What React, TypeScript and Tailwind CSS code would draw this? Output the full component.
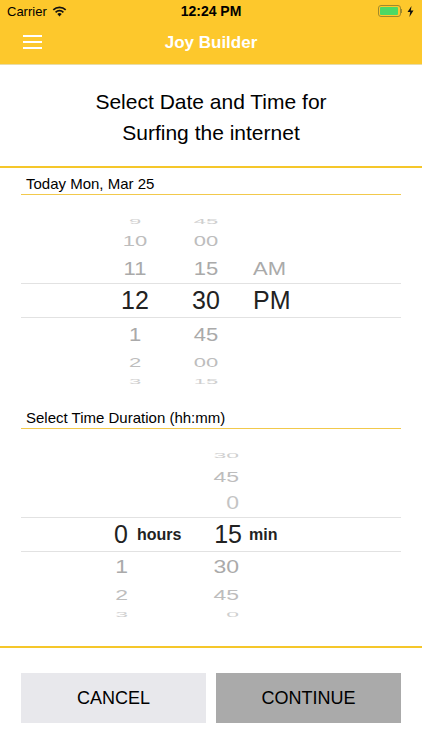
import React from "react";

const font = { fontFamily: '"Liberation Sans", Arial, sans-serif' };

type Cell = { h?: string; m?: string; ap?: string };

const StatusBar = () => (
  <div className="h-[22px] bg-[#fdc82c] flex items-center justify-between px-[7px] text-black">
    <div className="flex items-center gap-[5px] w-[110px]">
      <span className="text-[13px] leading-none">Carrier</span>
      <svg width="15" height="11" viewBox="0 0 15 11">
        <path d="M7.5 10.5 L5.3 8.1 A3.2 3.2 0 0 1 9.7 8.1 Z" fill="#111" />
        <path d="M3.6 6.3 A5.6 5.6 0 0 1 11.4 6.3" stroke="#111" strokeWidth="1.7" fill="none" />
        <path d="M1.3 3.9 A9 9 0 0 1 13.7 3.9" stroke="#111" strokeWidth="1.7" fill="none" />
      </svg>
    </div>
    <span className="text-[14px] font-bold leading-none">12:24 PM</span>
    <div className="flex items-center justify-end gap-[3px] w-[110px] pr-[1px]">
      <div className="w-[23px] h-[12px] rounded-[3px] border border-[#a08a2c] p-[1px] flex">
        <div className="w-[18px] h-full rounded-[1px] bg-[#4cd964]" />
      </div>
      <div className="w-[1px] h-[4px] bg-[#a08a2c] -ml-[3px]" />
      <svg width="7" height="11" viewBox="0 0 7 11" className="ml-[2px]">
        <path d="M4.5 0 L0.5 6 L3.2 6 L2.4 11 L6.5 4.6 L3.8 4.6 Z" fill="#111" />
      </svg>
    </div>
  </div>
);

const NavBar = () => (
  <div className="h-[43px] bg-[#fdc82c] relative flex items-center justify-center border-b border-[#e8dca8]">
    <div className="absolute left-[23px] top-[13px] flex flex-col gap-[4px]">
      <div className="w-[19px] h-[2px] bg-white" />
      <div className="w-[19px] h-[2px] bg-white" />
      <div className="w-[19px] h-[2px] bg-white" />
    </div>
    <span className="text-white text-[17px] font-semibold">Joy Builder</span>
  </div>
);

const SectionLabel = ({ text, h }: { text: string; h: string }) => (
  <div className={`mx-[21px] ${h} flex items-end border-b border-[#f2c94c] px-[5px] pb-[1px]`}>
    <span className="text-[15px] leading-[18px] text-black">{text}</span>
  </div>
);

const TimeRow = ({ c, h, color, squash }: { c: Cell; h: string; color: string; squash: string }) => (
  <div className={`${h} flex items-center ${color} text-[22px] leading-none`}>
    <div className={`flex items-center w-full ${squash}`}>
      <div className="w-[110px]" />
      <div className="w-[50px] text-center">{c.h}</div>
      <div className="w-[21px]" />
      <div className="w-[50px] text-center">{c.m}</div>
      <div className="w-[22px]" />
      <div className="text-left">{c.ap}</div>
    </div>
  </div>
);

const DurRow = ({ hr, mn, h, color, squash }: { hr?: string; mn?: string; h: string; color: string; squash: string }) => (
  <div className={`${h} flex items-center ${color} text-[23px] leading-none`}>
    <div className={`flex items-center w-full ${squash}`}>
      <div className="w-[128px] text-right">{hr}</div>
      <div className="w-[111px] text-right">{mn}</div>
    </div>
  </div>
);

export default function App() {
  return (
    <div className="w-[422px] h-[750px] bg-white overflow-hidden flex flex-col" style={font}>
      <StatusBar />
      <NavBar />

      <div className="h-[101px] flex flex-col items-center justify-center text-[21px] leading-[31px] text-black pt-[3px]">
        <div>Select Date and Time for</div>
        <div>Surfing the internet</div>
      </div>

      <div className="h-[2px] bg-[#f5c72a]" />

      <SectionLabel text="Today Mon, Mar 25" h="h-[27px]" />

      <div className="flex flex-col">
        <div className="h-[21px]" />
        <TimeRow c={{ h: "9", m: "45" }} h="h-[12px]" color="text-[#cfcfcf]" squash="scale-y-[0.35]" />
        <TimeRow c={{ h: "10", m: "00" }} h="h-[26px]" color="text-[#bdbdbd]" squash="scale-y-[0.65]" />
        <TimeRow c={{ h: "11", m: "15", ap: "AM" }} h="h-[29px]" color="text-[#aaaaaa]" squash="scale-y-[0.82]" />
        <div className="mx-[21px] h-[35px] border-y border-[#e2e2e2] flex items-center">
          <div className="w-full -ml-[21px] flex items-center text-[25px] text-[#222] leading-none">
            <div className="w-[110px]" />
            <div className="w-[50px] text-center">12</div>
            <div className="w-[21px]" />
            <div className="w-[50px] text-center">30</div>
            <div className="w-[22px]" />
            <div>PM</div>
          </div>
        </div>
        <TimeRow c={{ h: "1", m: "45" }} h="h-[33px]" color="text-[#aaaaaa]" squash="scale-y-[0.82]" />
        <TimeRow c={{ h: "2", m: "00" }} h="h-[23px]" color="text-[#bdbdbd]" squash="scale-y-[0.6]" />
        <TimeRow c={{ h: "3", m: "15" }} h="h-[15px]" color="text-[#cfcfcf]" squash="scale-y-[0.3]" />
      </div>

      <SectionLabel text="Select Time Duration (hh:mm)" h="h-[40px]" />

      <div className="flex flex-col">
        <div className="h-[16px]" />
        <DurRow mn="30" h="h-[21px]" color="text-[#cfcfcf]" squash="scale-y-[0.3]" />
        <DurRow mn="45" h="h-[23px]" color="text-[#bdbdbd]" squash="scale-y-[0.6]" />
        <DurRow mn="0" h="h-[28px]" color="text-[#c4c4c4]" squash="scale-y-[0.78]" />
        <div className="mx-[21px] h-[35px] border-y border-[#e2e2e2] flex items-center">
          <div className="w-full -ml-[21px] flex items-center text-[25px] text-[#222] leading-none">
            <div className="w-[128px] text-right">0</div>
            <div className="w-[9px]" />
            <div className="w-[66px] text-[16px] font-bold">hours</div>
            <div className="w-[39px] text-right">15</div>
            <div className="w-[7px]" />
            <div className="text-[16px] font-bold">min</div>
          </div>
        </div>
        <DurRow hr="1" mn="30" h="h-[30px]" color="text-[#aaaaaa]" squash="scale-y-[0.78]" />
        <DurRow hr="2" mn="45" h="h-[26px]" color="text-[#bdbdbd]" squash="scale-y-[0.6]" />
        <DurRow hr="3" mn="0" h="h-[12px]" color="text-[#cfcfcf]" squash="scale-y-[0.3]" />
      </div>

      <div className="flex-1" />
      <div className="h-[2px] bg-[#f5c72a] mb-[25px]" />

      <div className="flex gap-[10px] px-[21px] mb-[27px]">
        <button className="flex-1 h-[50px] bg-[#e8e8ec] text-[18px] text-black">CANCEL</button>
        <button className="flex-1 h-[50px] bg-[#aaaaaa] text-[18px] text-black">CONTINUE</button>
      </div>
    </div>
  );
}
